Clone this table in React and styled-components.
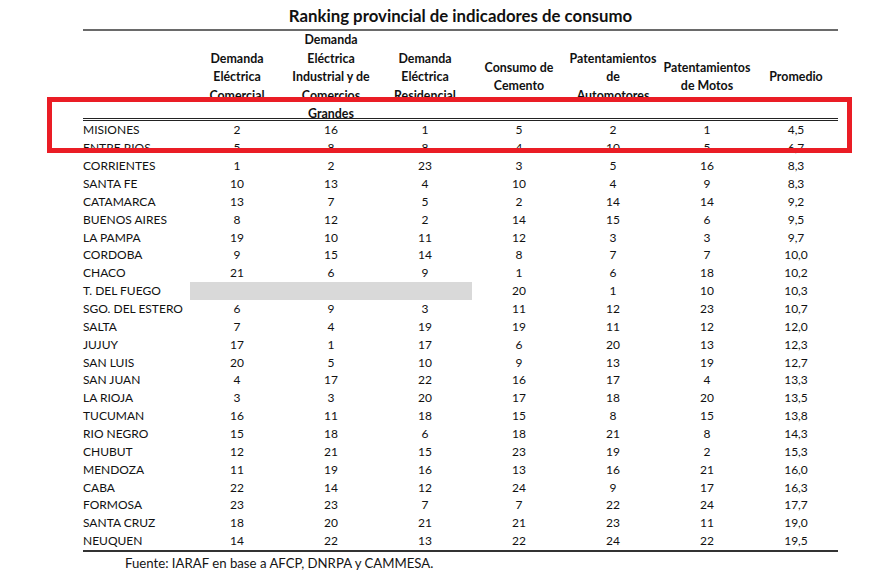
import React from "react";
import styled, { createGlobalStyle } from "styled-components";

const GlobalStyle = createGlobalStyle`
  body {
    margin: 0;
    background: #ffffff;
    font-family: Lato, "Liberation Sans", sans-serif;
    color: #141414;
  }
`;

const COLS = "107px repeat(6, 94px) 84px";

const headers = [
  ["Demanda", "Eléctrica", "Comercial"],
  ["Demanda", "Eléctrica", "Industrial y de", "Comercios", "Grandes"],
  ["Demanda", "Eléctrica", "Residencial"],
  ["Consumo de", "Cemento"],
  ["Patentamientos", "de", "Automotores"],
  ["Patentamientos", "de Motos"],
  ["Promedio"],
];

const rows = [
  ["MISIONES", "2", "16", "1", "5", "2", "1", "4,5"],
  ["ENTRE RIOS", "5", "8", "8", "4", "10", "5", "6,7"],
  ["CORRIENTES", "1", "2", "23", "3", "5", "16", "8,3"],
  ["SANTA FE", "10", "13", "4", "10", "4", "9", "8,3"],
  ["CATAMARCA", "13", "7", "5", "2", "14", "14", "9,2"],
  ["BUENOS AIRES", "8", "12", "2", "14", "15", "6", "9,5"],
  ["LA PAMPA", "19", "10", "11", "12", "3", "3", "9,7"],
  ["CORDOBA", "9", "15", "14", "8", "7", "7", "10,0"],
  ["CHACO", "21", "6", "9", "1", "6", "18", "10,2"],
  ["T. DEL FUEGO", null, null, null, "20", "1", "10", "10,3"],
  ["SGO. DEL ESTERO", "6", "9", "3", "11", "12", "23", "10,7"],
  ["SALTA", "7", "4", "19", "19", "11", "12", "12,0"],
  ["JUJUY", "17", "1", "17", "6", "20", "13", "12,3"],
  ["SAN LUIS", "20", "5", "10", "9", "13", "19", "12,7"],
  ["SAN JUAN", "4", "17", "22", "16", "17", "4", "13,3"],
  ["LA RIOJA", "3", "3", "20", "17", "18", "20", "13,5"],
  ["TUCUMAN", "16", "11", "18", "15", "8", "15", "13,8"],
  ["RIO NEGRO", "15", "18", "6", "18", "21", "8", "14,3"],
  ["CHUBUT", "12", "21", "15", "23", "19", "2", "15,3"],
  ["MENDOZA", "11", "19", "16", "13", "16", "21", "16,0"],
  ["CABA", "22", "14", "12", "24", "9", "17", "16,3"],
  ["FORMOSA", "23", "23", "7", "7", "22", "24", "17,7"],
  ["SANTA CRUZ", "18", "20", "21", "21", "23", "11", "19,0"],
  ["NEUQUEN", "14", "22", "13", "22", "24", "22", "19,5"],
];

const Page = styled.div`
  position: relative;
  width: 879px;
  height: 570px;
  overflow: hidden;
`;

const Sheet = styled.div`
  width: 755px;
  margin-left: 83px;
`;

const Title = styled.div`
  height: 24px;
  padding-top: 5px;
  line-height: 22px;
  font-size: 16.8px;
  font-weight: 700;
  text-align: center;
  color: #111;
  border-bottom: 2px solid #6a6a6a;
`;

const HeaderGrid = styled.div`
  display: grid;
  grid-template-columns: ${COLS};
  height: 87px;
  border-bottom: 3px double #222;
`;

const HeadCell = styled.div`
  display: flex;
  flex-direction: column;
  justify-content: center;
  align-items: center;
  padding-bottom: 2px;
  font-size: 12.4px;
  font-weight: 700;
  line-height: 18.5px;
  white-space: nowrap;
  color: #111;
`;

const BodyGrid = styled.div`
  display: grid;
  grid-template-columns: ${COLS};
  grid-auto-rows: 17.86px;
  border-bottom: 2px solid #333;
`;

const Cell = styled.div`
  display: flex;
  align-items: center;
  justify-content: ${(p) => (p.$name ? "flex-start" : "center")};
  font-size: 12px;
  white-space: nowrap;
  color: #111;
`;

const Blank = styled.div`
  grid-column: span 3;
  background: #d9d9d9;
`;

const Source = styled.div`
  padding: 2px 0 0 42px;
  font-size: 13.2px;
  line-height: 18px;
  color: #141414;
`;

const Highlight = styled.div`
  position: absolute;
  left: 47px;
  top: 97px;
  width: 795px;
  height: 46px;
  border: 5px solid #ea1d25;
  pointer-events: none;
`;

export default function App() {
  return (
    <Page>
      <GlobalStyle />
      <Sheet>
        <Title>Ranking provincial de indicadores de consumo</Title>
        <HeaderGrid>
          <HeadCell />
          {headers.map((lines, i) => (
            <HeadCell key={i}>
              {lines.map((l) => (
                <span key={l}>{l}</span>
              ))}
            </HeadCell>
          ))}
        </HeaderGrid>
        <BodyGrid>
          {rows.map((r) => (
            <React.Fragment key={r[0]}>
              <Cell $name>{r[0]}</Cell>
              {r[1] === null ? (
                <Blank />
              ) : (
                r.slice(1, 4).map((v, i) => <Cell key={i}>{v}</Cell>)
              )}
              {r.slice(4).map((v, i) => (
                <Cell key={"b" + i}>{v}</Cell>
              ))}
            </React.Fragment>
          ))}
        </BodyGrid>
        <Source>Fuente: IARAF en base a AFCP, DNRPA y CAMMESA.</Source>
      </Sheet>
      <Highlight />
    </Page>
  );
}
